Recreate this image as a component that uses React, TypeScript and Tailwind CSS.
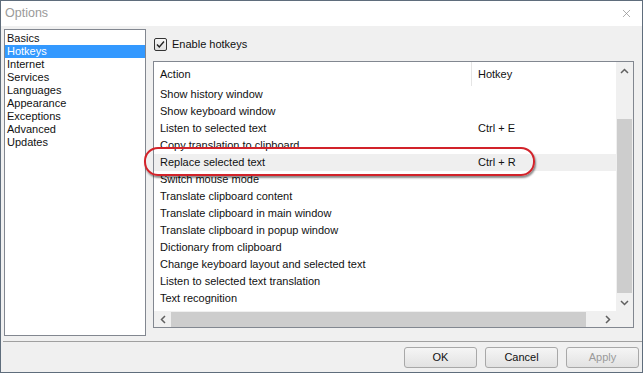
import { X } from 'lucide-react'

const sections = ['Basics', 'Hotkeys', 'Internet', 'Services', 'Languages', 'Appearance', 'Exceptions', 'Advanced', 'Updates']

const hotkeys: { action: string; key?: string; active?: boolean }[] = [
  { action: 'Show history window' },
  { action: 'Show keyboard window' },
  { action: 'Listen to selected text', key: 'Ctrl + E' },
  { action: 'Copy translation to clipboard' },
  { action: 'Replace selected text', key: 'Ctrl + R', active: true },
  { action: 'Switch mouse mode' },
  { action: 'Translate clipboard content' },
  { action: 'Translate clipboard in main window' },
  { action: 'Translate clipboard in popup window' },
  { action: 'Dictionary from clipboard' },
  { action: 'Change keyboard layout and selected text' },
  { action: 'Listen to selected text translation' },
  { action: 'Text recognition' },
]

export default function App() {
  return (
    <div className="relative w-[643px] h-[373px] overflow-hidden border border-[#5f6d7c] bg-[#f0f0f0] font-['Liberation_Sans',Arial,sans-serif] text-[11px] text-[#111]">
      {/* title bar */}
      <div className="h-[25px] bg-white flex items-center justify-between pl-[4px] pr-[9px]">
        <span className="text-[12.5px] text-[#9a9a9a]">Options</span>
        <X className="w-[13px] h-[13px] text-[#8a8a8a]" strokeWidth={1.3} />
      </div>

      <div className="flex pt-[3px] pl-[3px]">
        {/* section list */}
        <div className="w-[142px] h-[307px] border border-[#828790] bg-white pt-[2px]">
          {sections.map((s) => (
            <div
              key={s}
              className={`h-[13px] leading-[13px] pl-[2px] ${s === 'Hotkeys' ? 'bg-[#3399ff] text-white' : ''}`}
            >
              {s}
            </div>
          ))}
        </div>

        <div className="ml-[7px] pt-[8px]">
          <div className="flex items-center h-[15px] pl-[1px]">
            <div className="w-[13px] h-[13px] border border-[#333] rounded-[2px] bg-gradient-to-b from-[#f6f6f6] to-[#dedede] flex items-center justify-center">
              <svg width="11" height="11" viewBox="0 0 11 11">
                <path d="M2 5.5 L4.3 8 L9 2.5" fill="none" stroke="#222" strokeWidth="1.4" />
              </svg>
            </div>
            <span className="ml-[5px]">Enable hotkeys</span>
          </div>

          {/* hotkey table */}
          <div className="mt-[9px] w-[481px] h-[267px] border border-[#828790] bg-white flex flex-col">
            <div className="flex h-[249px]">
              <div className="w-[462px]">
                <div className="flex h-[24px] items-center">
                  <div className="w-[318px] pl-[6px] h-full flex items-center border-r border-[#e5e5e5]">Action</div>
                  <div className="pl-[6px]">Hotkey</div>
                </div>
                {hotkeys.map((r) => (
                  <div key={r.action} className={`flex h-[17px] items-center ${r.active ? 'bg-[#efefef]' : ''}`}>
                    <div className="w-[318px] pl-[6px] whitespace-nowrap">{r.action}</div>
                    <div className="pl-[6px]">{r.key}</div>
                  </div>
                ))}
              </div>
              {/* vertical scrollbar */}
              <div className="w-[17px] bg-[#f0f0f0] flex flex-col items-center">
                <div className="h-[17px] flex items-center justify-center">
                  <svg width="9" height="6" viewBox="0 0 9 6">
                    <polyline points="1,5 4.5,1.5 8,5" fill="none" stroke="#606060" strokeWidth="1.5" />
                  </svg>
                </div>
                <div className="mt-[40px] w-[15px] h-[174px] bg-[#cdcdcd]" />
                <div className="mt-auto h-[17px] flex items-center justify-center">
                  <svg width="9" height="6" viewBox="0 0 9 6">
                    <polyline points="1,1 4.5,4.5 8,1" fill="none" stroke="#606060" strokeWidth="1.5" />
                  </svg>
                </div>
              </div>
            </div>
            {/* horizontal scrollbar */}
            <div className="flex h-[16px]">
              <div className="w-[462px] bg-[#f0f0f0] flex items-center">
                <div className="w-[17px] flex items-center justify-center">
                  <svg width="6" height="9" viewBox="0 0 6 9">
                    <polyline points="5,1 1.5,4.5 5,8" fill="none" stroke="#606060" strokeWidth="1.5" />
                  </svg>
                </div>
                <div className="w-[415px] h-[15px] bg-[#cdcdcd]" />
                <div className="ml-auto w-[17px] flex items-center justify-center">
                  <svg width="6" height="9" viewBox="0 0 6 9">
                    <polyline points="1,1 4.5,4.5 1,8" fill="none" stroke="#606060" strokeWidth="1.5" />
                  </svg>
                </div>
              </div>
              <div className="w-[17px] bg-[#f0f0f0]" />
            </div>
          </div>
        </div>
      </div>

      {/* separator */}
      <div className="mt-[5px] ml-[2px] h-px bg-[#a0a0a0]" />

      {/* buttons */}
      <div className="flex justify-end gap-[8px] pt-[5px] pr-[3px]">
        <Button label="OK" />
        <Button label="Cancel" />
        <Button label="Apply" disabled />
      </div>

      {/* annotation around the edited row */}
      <div className="absolute left-[143px] top-[146px] w-[391px] h-[29px] rounded-[14px] border-[2.5px] border-[#d2232a] shadow-[1px_2px_2px_rgba(0,0,0,0.45)]" />
    </div>
  )
}

function Button({ label, disabled }: { label: string; disabled?: boolean }) {
  return (
    <div
      className={`w-[73px] h-[21px] rounded-[3px] border border-[#a8a8a8] bg-gradient-to-b from-[#f5f5f5] to-[#e2e2e2] flex items-center justify-center ${disabled ? 'text-[#9a9a9a]' : ''}`}
    >
      {label}
    </div>
  )
}
